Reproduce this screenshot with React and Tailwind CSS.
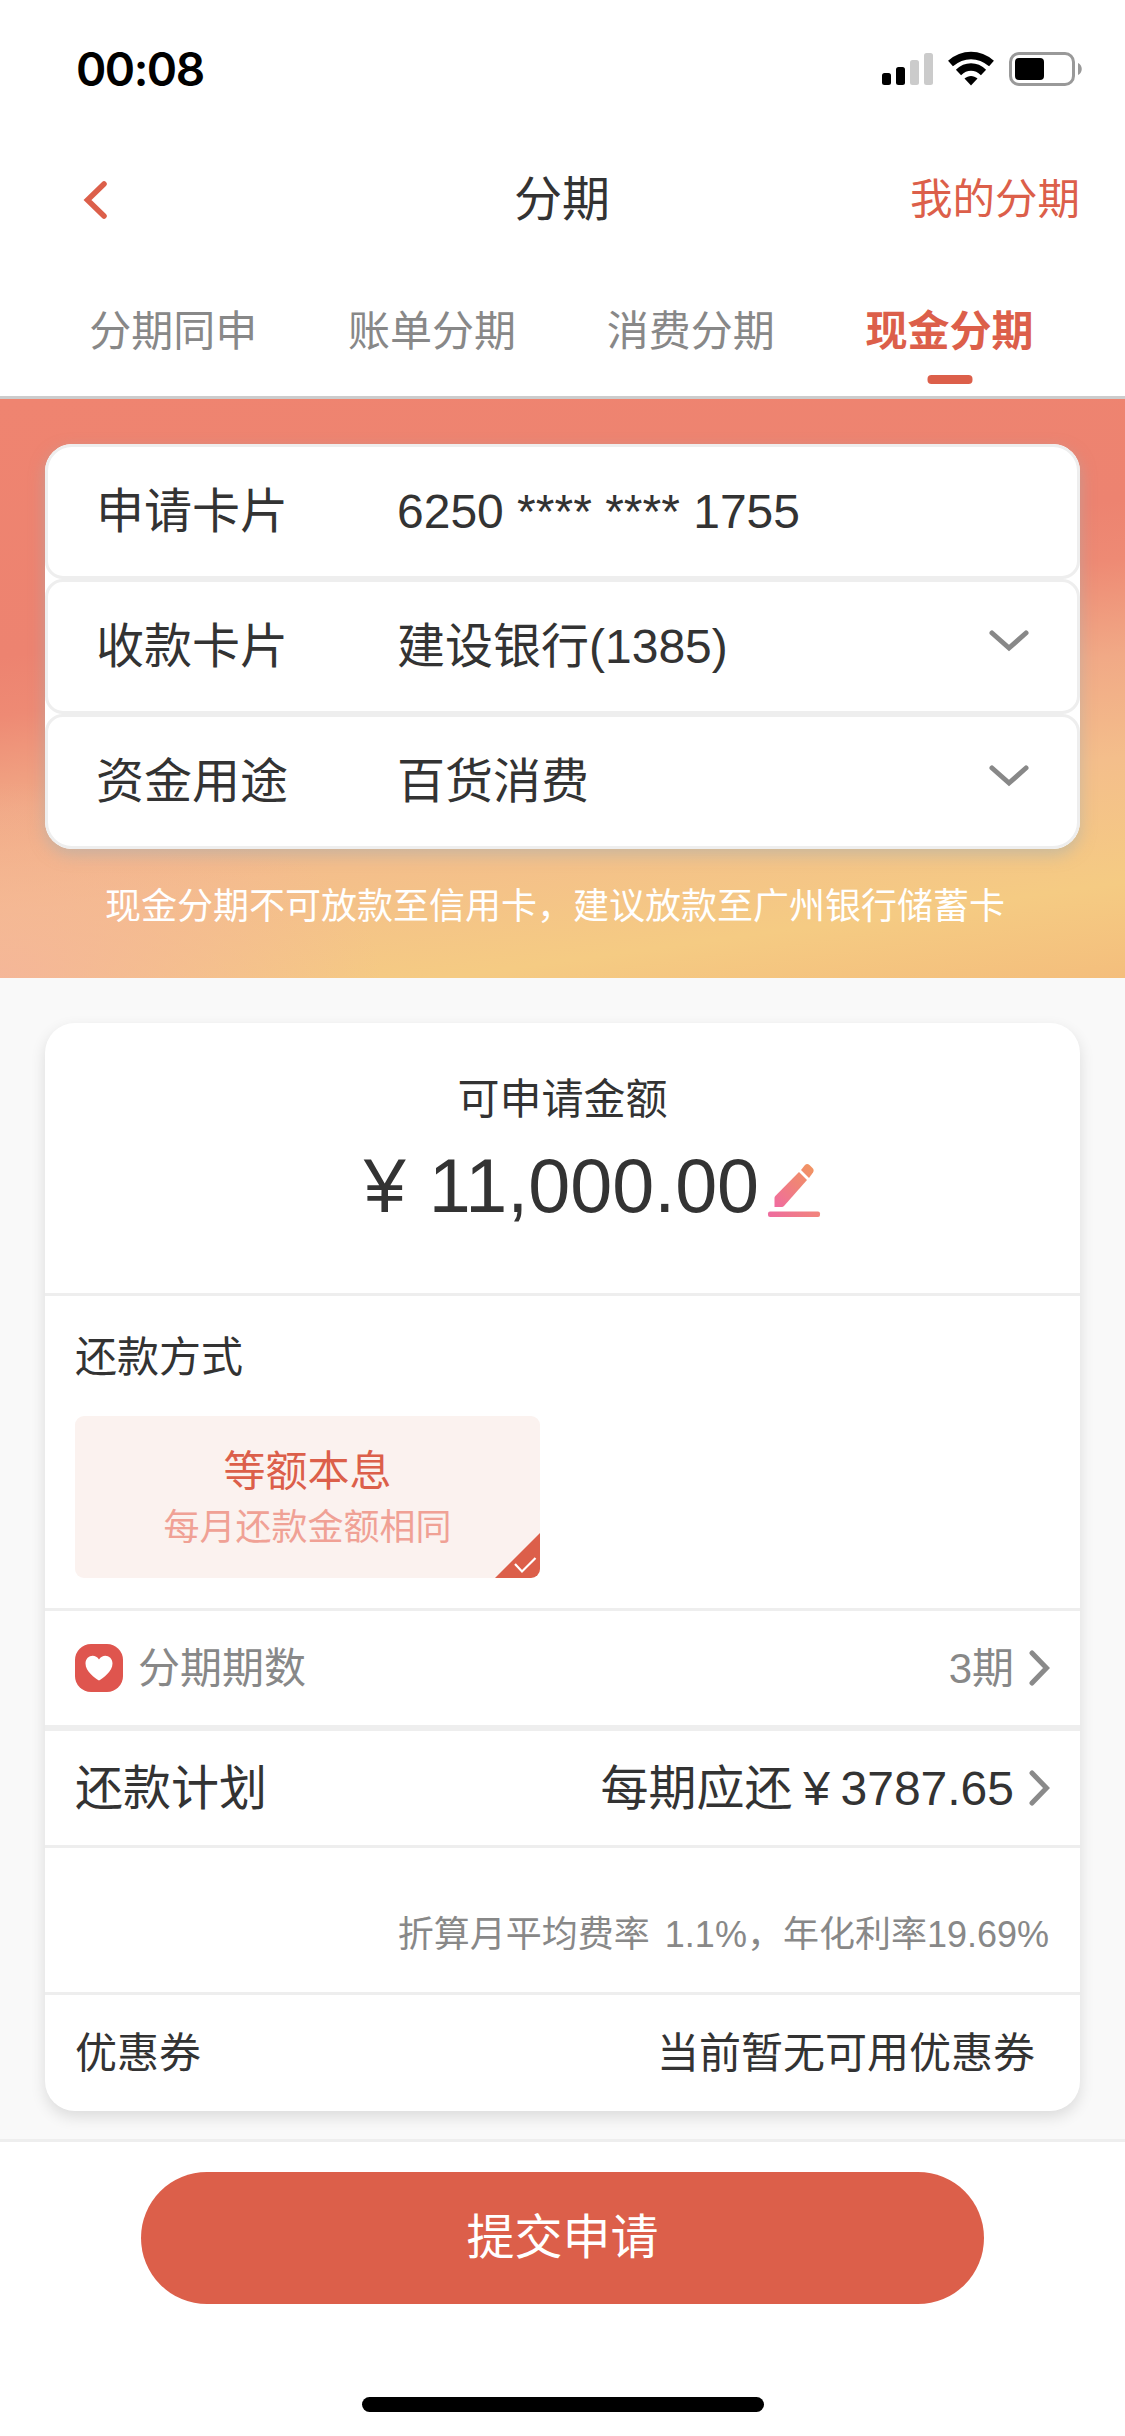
import { useState } from 'react';

const tabs = ['分期同申', '账单分期', '消费分期', '现金分期'];

const fields = [
  { label: '申请卡片', value: '6250 **** **** 1755', select: false },
  { label: '收款卡片', value: '建设银行(1385)', select: true },
  { label: '资金用途', value: '百货消费', select: true },
];

function StatusBar() {
  return (
    <div className="h-[132px] flex items-center justify-between pl-[76px] pr-[42px] pt-[6px]">
      <span className="font-['Inter',sans-serif] font-semibold text-[46px] leading-none tracking-[-1.5px] text-black">00:08</span>
      <svg className="w-[202px] h-[36px]" viewBox="0 0 202 36">
        <rect x="1" y="22" width="9" height="12" rx="2.5" />
        <rect x="15" y="16" width="9" height="18" rx="2.5" />
        <rect x="29" y="9" width="9" height="25" rx="2.5" fill="#cbcbcb" />
        <rect x="43" y="2" width="9" height="32" rx="2.5" fill="#cbcbcb" />
        <g fill="none" stroke="#000" strokeWidth="7.5">
          <path d="M69.500 12.500C82 1.800 98 1.800 110.500 12.500" />
          <path d="M77.500 21.500C85 14.300 95 14.300 102.500 21.500" />
        </g>
        <path d="M83.500 27.500C87.500 24 92.500 24 96.500 27.500L90 34.500Z" />
        <rect x="129.500" y="2.500" width="63" height="31" rx="8.500" fill="none" stroke="#999" strokeWidth="3" />
        <rect x="134" y="7" width="29" height="22" rx="4" />
        <path d="M197 12C202 14 202 22 197 24Z" fill="#999" />
      </svg>
    </div>
  );
}

function ArrowRight() {
  return (
    <svg className="w-[21px] h-[36px] ml-[15px]" viewBox="0 0 21 36" fill="none" stroke="#8a8a8a" strokeWidth="5" strokeLinecap="round">
      <path d="M3 3L17.500 18L3 33" />
    </svg>
  );
}

function ArrowDown() {
  return (
    <svg className="w-[40px] h-[22px] ml-auto mb-[12px]" viewBox="0 0 40 22" fill="none" stroke="#888" strokeWidth="5" strokeLinecap="round">
      <path d="M3 3L20 18L37 3" />
    </svg>
  );
}

function PencilIcon() {
  return (
    <svg className="w-[54px] h-[56px] absolute left-full top-[13px] ml-[8px]" viewBox="0 0 54 56">
      <defs>
        <linearGradient id="pencil" x1="8" y1="45" x2="46" y2="4" gradientUnits="userSpaceOnUse">
          <stop offset="0" stopColor="#f06ba0" />
          <stop offset="0.550" stopColor="#f08378" />
          <stop offset="1" stopColor="#f19562" />
        </linearGradient>
        <linearGradient id="line" x1="0" y1="0" x2="54" y2="0" gradientUnits="userSpaceOnUse">
          <stop offset="0" stopColor="#ee6c9f" />
          <stop offset="1" stopColor="#f2857b" />
        </linearGradient>
      </defs>
      <path d="M32 10L40 18L17 44Q16 45 15 45H7.500V36Q7.500 35 8.300 34Z" fill="url(#pencil)" />
      <path d="M34 8L38 3Q40 1 42.500 3L45.500 6Q47.500 8 46 10.500L42 16Z" fill="url(#pencil)" />
      <rect x="1" y="49.500" width="52" height="5.500" rx="2" fill="url(#line)" />
    </svg>
  );
}

export default function App() {
  const [active, setActive] = useState(3);

  return (
    <div className="w-[1125px] h-[2436px] flex flex-col bg-white text-[#333] leading-none font-['Liberation_Sans','Noto_Sans_CJK_SC',sans-serif] overflow-hidden">
      <header className="border-b-[3px] border-[#ccc] bg-white">
        <StatusBar />
        <div className="h-[132px] grid grid-cols-3 items-center pl-[83px] pr-[45px] pt-[4px]">
          <svg className="w-[25px] h-[40px]" viewBox="0 0 25 40" fill="none" stroke="#dc5f4a" strokeWidth="5.5" strokeLinecap="round">
            <path d="M21 4L4.500 20L21 36" />
          </svg>
          <h1 className="text-center text-[48px] -ml-[39px]">分期</h1>
          <a className="text-right text-[42.5px] text-[#dc5f4a]">我的分期</a>
        </div>
        <nav className="h-[132px] grid grid-cols-4 pl-[44px] pr-[46px]">
          {tabs.map((tab, i) => (
            <button
              key={tab}
              onClick={() => setActive(i)}
              className={
                i === active
                  ? 'relative pt-[3px] text-[42px] font-bold text-[#dc5f4a]'
                  : 'relative pt-[3px] text-[42px] text-[#888]'
              }
            >
              {tab}
              {i === active && (
                <span className="absolute left-1/2 -translate-x-1/2 bottom-[12px] w-[45px] h-[9px] rounded-[4px] bg-[#dc5f4a]" />
              )}
            </button>
          ))}
        </nav>
      </header>

      <section className="h-[579px] px-[45px] pt-[45px] bg-[radial-gradient(ellipse_at_0%_100%,rgba(245,180,155,0.850)_0%,rgba(245,180,155,0)_24%),linear-gradient(172deg,#ef8470_0%,#ed8370_35%,#ee8a74_43%,#f1a986_56%,#f4be8b_70%,#f5cb83_87%,#f4be7c_100%)]">
        <div className="rounded-[27px] bg-white overflow-hidden shadow-[0_6px_15px_rgba(160,175,180,0.500)]">
          {fields.map((f) => (
            <div key={f.label} className="h-[135px] flex items-center pl-[49px] pr-[48px] border-[3px] border-[#eee] rounded-[18px] first:rounded-t-[27px] last:rounded-b-[27px] text-[48px]">
              <span className="w-[301px] -ml-px">{f.label}</span>
              <span>{f.value}</span>
              {f.select && <ArrowDown />}
            </div>
          ))}
        </div>
        <p className="pl-[60px] pt-[40px] text-[36px] text-white whitespace-nowrap">
          现金分期不可放款至信用卡，建议放款至广州银行储蓄卡
        </p>
      </section>

      <main className="h-[1161px] px-[45px] pt-[45px] bg-[#f9f9f9]">
        <div className="h-[1088px] rounded-[30px] bg-white shadow-[0_6px_15px_rgba(0,0,0,0.120)]">
          <div className="h-[273px] flex flex-col items-center pt-[56px] border-b-[3px] border-[#eee]">
            <span className="text-[42px]">可申请金额</span>
            <div className="relative mt-[28px] text-[75.5px] whitespace-nowrap">
              <span className="-ml-[2px] mr-[2px]">¥</span> 11,000.00
              <PencilIcon />
            </div>
          </div>

          <div className="h-[315px] px-[30px] pt-[41px] border-b-[3px] border-[#eee]">
            <h2 className="text-[42px]">还款方式</h2>
            <div className="relative mt-[37px] w-[465px] h-[162px] pt-[35px] rounded-[9px] overflow-hidden bg-[#fbf2ef] text-center">
              <p className="text-[42px] text-[#dc5f4a]">等额本息</p>
              <p className="mt-[17px] text-[36px] text-[#f0a195]">每月还款金额相同</p>
              <svg className="absolute right-0 bottom-0 w-[45px] h-[45px]" viewBox="0 0 45 45">
                <path d="M45 0V45H0Z" fill="#dc5f4a" />
                <path d="M20 31L27 38.500L40.500 25" fill="none" stroke="#fff" strokeWidth="2.200" />
              </svg>
            </div>
          </div>

          <div className="h-[120px] flex items-center px-[30px] border-b-[6px] border-[#eee] text-[42px] text-[#888]">
            <svg className="w-[48px] h-[48px] mr-[15px]" viewBox="0 0 48 48">
              <rect width="48" height="48" rx="16" fill="#df554e" />
              <path d="M24 36.500C20 34 10.500 27.500 10.500 19.500C10.500 11.500 20 9 24 15.500C28 9 37.500 11.500 37.500 19.500C37.500 27.500 28 34 24 36.500Z" fill="#fff" />
            </svg>
            <span className="pt-[2px]">分期期数</span>
            <span className="ml-auto pt-[2px]">3期</span>
            <ArrowRight />
          </div>

          <div className="h-[117px] flex items-center px-[30px] border-b-[3px] border-[#eee] text-[48px]">
            <span className="pt-[2px]">还款计划</span>
            <span className="ml-auto pt-[2px]">
              每期应还<span className="inline-block w-[48px] text-center">¥</span>3787.65
            </span>
            <ArrowRight />
          </div>

          <div className="h-[147px] flex items-center justify-end pl-[30px] pr-[31px] pt-[30px] border-b-[3px] border-[#eee] text-[36px] text-[#888]">
            <span className="mr-[15px]">折算月平均费率</span>1.1%，年化利率19.69%
          </div>

          <div className="h-[116px] flex items-center justify-between pl-[30px] pr-[45px] pt-px text-[42px]">
            <span>优惠券</span>
            <span>当前暂无可用优惠券</span>
          </div>
        </div>
      </main>

      <footer className="flex-1 flex flex-col items-center pt-[30px] border-t-[3px] border-[#eee] bg-white">
        <button className="w-[843px] h-[132px] rounded-full bg-[#dc5f4a] text-[48px] text-white">提交申请</button>
        <div className="mt-[93px] w-[402px] h-[15px] rounded-full bg-black" />
      </footer>
    </div>
  );
}
